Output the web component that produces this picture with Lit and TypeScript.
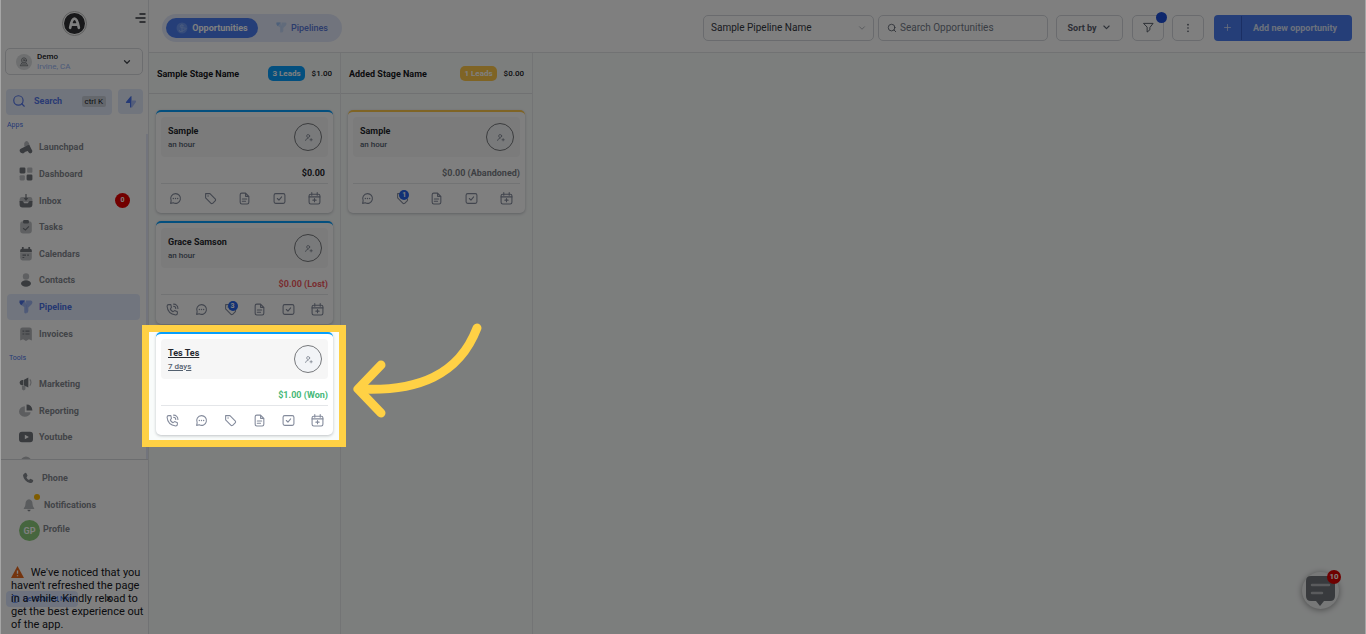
import { LitElement, html, svg, css, nothing } from "lit";
import { customElement, property } from "lit/decorators.js";

const line = (body: unknown, size = 14) => html`<svg
  width=${size} height=${size} viewBox="0 0 24 24" fill="none" stroke="currentColor"
  stroke-width="2" stroke-linecap="round" stroke-linejoin="round" aria-hidden="true">${body}</svg>`;

const solid = (body: unknown, size = 14) => html`<svg
  width=${size} height=${size} viewBox="0 0 24 24" fill="currentColor" aria-hidden="true">${body}</svg>`;

const chevron = svg`<path d="M6 9l6 6 6-6"/>`;
const magnifier = svg`<circle cx="11" cy="11" r="8"/><path d="M21 21l-4.3-4.3"/>`;
const funnel = svg`<path d="M1 4q0-3 3-3h6l3 8v12q0 2-2 2t-2-2v-9L3 8Q1 6 1 4z" opacity=".45"/><path d="M12 1h8q3 0 3 3 0 2-2 4l-5 5v6q0 2-3 4z" opacity=".45"/><path d="M1 1h9L4 9Q1 7 1 4z"/>`;
const bell = svg`<g opacity=".6"><path d="M12 2q6 1 6 8 0 5 3 8v1H3v-1q3-3 3-8 0-7 6-8z"/></g><path d="M9 20h6q-1 3-3 3t-3-3z"/>`;
const handset = svg`<path d="M6 2q2-1 3 1l2 4q0 1-1 2l-1 2q1 3 5 5l2-2q1-1 2 0l4 2q1 1 0 3-2 4-6 3Q4 19 2 7q0-3 4-5z"/>`;

const actionIcons: Record<string, unknown> = {
  call: svg`<path d="M14 6a4 4 0 0 1 4 4M14 2a8 8 0 0 1 8 8M9 3H5Q2 3 2 6q1 14 16 16 3 0 3-3v-3l-5-2-3 2q-4-2-5-5l2-3z"/>`,
  chat: svg`<path d="M12 3a9 9 0 1 1-4 17l-5 1 1-5a9 9 0 0 1 8-13z"/><path d="M8 12h.01M12 12h.01M16 12h.01" stroke-width="2.6"/>`,
  tag: svg`<path d="M3 3h8l10 10q1 2 0 3l-5 5q-2 1-3 0L3 11z"/><path d="M7.500 7.500h.01" stroke-width="2.600"/>`,
  note: svg`<path d="M14 2H7Q4 2 4 5v14q0 3 3 3h10q3 0 3-3V8zM14 2v6h6M8 13h8M8 17h6"/>`,
  task: svg`<rect x="2" y="3" width="20" height="18" rx="3"/><path d="M8 12l3 3 5-6"/>`,
  event: svg`<rect x="2" y="4" width="20" height="18" rx="3"/><path d="M2 9h20M7 1v5M17 1v5M12 12v6M9 15h6"/>`,
};

const menuIcons: Record<string, unknown> = {
  launchpad: svg`<path d="M9 5q4-7 8 0l2 7-10-1z" opacity=".5"/><path d="M3 15L15 9q3-1 4 2l4 8q0 4-4 4-2 0-4-4-4 1-8 4-5 0-6-4 0-3 2-4z"/>`,
  dashboard: svg`<rect x="1" y="1" width="10" height="10" rx="2"/><rect x="13" y="13" width="10" height="10" rx="2"/><g opacity=".45"><rect x="14" y="1" width="9" height="9" rx="2"/><rect x="1" y="14" width="9" height="9" rx="2"/></g>`,
  inbox: svg`<path d="M5 5h14q4 0 4 5v4H1v-4q0-5 4-5z" opacity=".45"/><path d="M1 12h5l3 4h6l3-4h5v6q0 5-5 5H6q-5 0-5-5z"/><path d="M11 0h2v7h3l-4 5-4-5h3z"/>`,
  tasks: svg`<rect x="2" y="2" width="20" height="21" rx="5" opacity=".45"/><rect x="7" y="0" width="10" height="6" rx="2"/><path d="M7 14l4 3 6-6" fill="none" stroke="currentColor" stroke-width="2"/>`,
  calendars: svg`<path d="M2 10h20v9q0 4-4 4H6q-4 0-4-4z" opacity=".45"/><path d="M2 9V6q0-3 3-3V0h3v3h8V0h3v3q3 0 3 3v3z"/><path d="M6 13h6v2H6zm0 4h3v2H6zm8-4h3v2h-3z"/>`,
  contacts: svg`<circle cx="12" cy="6" r="5.500" opacity=".45"/><ellipse cx="12" cy="18" rx="8.500" ry="5.500"/>`,
  pipeline: funnel,
  invoices: svg`<path d="M2 5q0-4 4-4h12q4 0 4 4v18l-5-2-5 3-5-3-5 2z" opacity=".55"/><path d="M6 6h3v2H6zm5 0h7v2h-7zm-5 5h3v2H6zm5 0h7v2h-7z"/>`,
  marketing: svg`<path d="M8 5l8-4v17l-8-4z"/><path d="M7 5v9H5q-4 0-4-4t4-5z"/><path d="M5 15h6v6q-3 4-6 0zM19 3q5 6 0 13l-1-2q3-5 0-9z" opacity=".5"/>`,
  reporting: svg`<path d="M10 4v10h10a10 9 0 1 1-10-10z" opacity=".5"/><path d="M13 1q9 0 10 10H13z"/>`,
  youtube: svg`<path d="M5 3h14q5 0 5 5v8q0 5-5 5H5q-5 0-5-5V8q0-5 5-5zm5 5v8l7-4z" fill-rule="evenodd"/>`,
  more: svg`<circle cx="12" cy="8" r="9" opacity=".5"/>`,
};

interface Opportunity {
  name: string;
  age: string;
  amount: string;
  status: "open" | "lost" | "won" | "abandoned";
  phone?: boolean;
  tags?: number;
  focused?: boolean;
}

interface Stage {
  name: string;
  leads: string;
  total: string;
  tone: "blue" | "amber";
  cards: Opportunity[];
}

const stages: Stage[] = [
  {
    name: "Sample Stage Name", leads: "3 Leads", total: "$1.00", tone: "blue",
    cards: [
      { name: "Sample", age: "an hour", amount: "$0.00", status: "open" },
      { name: "Grace Samson", age: "an hour", amount: "$0.00 (Lost)", status: "lost", phone: true, tags: 3 },
      { name: "Tes Tes", age: "7 days", amount: "$1.00 (Won)", status: "won", phone: true, focused: true },
    ],
  },
  {
    name: "Added Stage Name", leads: "1 Leads", total: "$0.00", tone: "amber",
    cards: [{ name: "Sample", age: "an hour", amount: "$0.00 (Abandoned)", status: "abandoned", tags: 1 }],
  },
];

const base = css`
  * { box-sizing: border-box; }
  svg { display: block; flex: none; overflow: visible; }
  button, input, select { font: inherit; color: inherit; margin: 0; padding: 0; border: 0; background: none; }
  a { color: inherit; text-decoration: none; }
`;

@customElement("opportunity-card")
export class OpportunityCard extends LitElement {
  @property({ attribute: false }) item!: Opportunity;
  @property() tone = "blue";

  static styles = [base, css`
    :host { display: block; position: relative; }
    .card {
      border-top: 2px solid #079ffc; border-radius: 5px; background: #fff;
      padding: 5px 5px 0; box-shadow: 0 1px 3px rgba(16, 24, 40, 0.25);
    }
    .amber { border-top-color: #ffc84a; }
    .summary {
      display: flex; align-items: center; justify-content: space-between;
      height: 40px; padding: 0 6px 0 7px; border-radius: 4px; background: #f6f6f6;
    }
    .who { padding-top: 1px; }
    .name { display: block; font-size: 9px; line-height: 14px; font-weight: 700; color: #24272d; }
    .age { display: block; font-size: 8px; line-height: 13px; font-weight: 500; color: #53606f; }
    .focused .name, .focused .age { text-decoration: underline; }
    .owner {
      display: grid; place-items: center; width: 28px; height: 28px;
      border: 1px solid #77797c; border-radius: 50%; background: #f2f4f7; color: #7a808c;
    }
    .amount {
      height: 27px; padding-top: 9px; border-bottom: 1px solid #e4e6e9;
      font-size: 9px; line-height: 14px; font-weight: 700; text-align: right; color: #7b7f86;
    }
    .open { color: #24272d; padding-right: 3px; }
    .lost { color: #f25a60; }
    .won { color: #46b878; }
    .actions { display: flex; height: 29px; margin: 0 -4px 0 -3px; }
    .action { position: relative; flex: 1; display: grid; place-items: center; color: #848b9c; }
    .count {
      position: absolute; left: 50%; top: 6px; width: 10px; height: 10px; border-radius: 50%;
      margin-left: -3px; background: #2463eb; color: #fff; font-size: 7px; line-height: 10px; font-weight: 700; text-align: center;
    }
    .spotlight {
      position: absolute; z-index: 20; inset: -7px -13px -12px -14px; pointer-events: none;
      border: 7px solid #ffd145; box-shadow: 0 0 0 1600px rgba(0, 0, 0, 0.5);
    }
    .arrow { position: absolute; z-index: 21; left: 194px; top: -11px; pointer-events: none; }
  `];

  private action(kind: string, label: string, count?: number) {
    return html`<button class="action" aria-label=${label}>
      ${line(actionIcons[kind], 13)}
      ${count ? html`<span class="count">${count}</span>` : nothing}
    </button>`;
  }

  render() {
    const o = this.item;
    return html`
      <article class="card ${this.tone} ${o.focused ? "focused" : ""}">
        <div class="summary">
          <div class="who"><span class="name">${o.name}</span><span class="age">${o.age}</span></div>
          <span class="owner">${line(svg`<circle cx="11" cy="8" r="4"/><path d="M4 20q1-6 7-6M19 15v6M16 18h6"/>`, 9)}</span>
        </div>
        <div class="amount ${o.status}">${o.amount}</div>
        <div class="actions">
          ${o.phone ? this.action("call", "Call") : nothing}
          ${this.action("chat", "Message")}
          ${this.action("tag", "Tags", o.tags)}
          ${this.action("note", "Notes")}
          ${this.action("task", "Tasks")}
          ${this.action("event", "Appointment")}
        </div>
      </article>
      ${o.focused ? html`
        <div class="spotlight"></div>
        <svg class="arrow" width="136" height="100" viewBox="350 320 136 100" fill="none"
          stroke="#ffd145" stroke-width="9" stroke-linecap="round" stroke-linejoin="round" aria-hidden="true">
          <path d="M477 327C459 374 418 391 359 388"/><path d="M381 364L358 388 381 412"/>
        </svg>` : nothing}
    `;
  }
}

@customElement("side-bar")
export class SideBar extends LitElement {
  static styles = [base, css`
    :host {
      display: flex; flex-direction: column; height: 100%; width: 149px; flex: none;
      border-right: 1px solid #e2e4e8; background: #fff;
      font-size: 9px; font-weight: 700; color: #84888f;
    }
    .brand { display: grid; grid-template-columns: 1fr auto 1fr; height: 48px; padding: 11px 2px 0 3px; }
    .logo {
      grid-column: 2; display: grid; place-items: center; width: 25px; height: 25px;
      border-radius: 50%; border: 1px solid #bbb; background: #303134; background-clip: content-box; padding: 1px; color: #fff;
    }
    .collapse { justify-self: end; align-self: start; color: #33363c; }
    .account {
      display: flex; align-items: center; gap: 5px; height: 27px; margin: 0 5px;
      padding: 1px 10px 0; border: 1px solid #d8dade; border-radius: 5px; text-align: left;
    }
    .avatar { display: grid; place-items: center; width: 16px; height: 16px; border-radius: 50%; background: #dcdee0; color: #74777c; }
    .account > svg { color: #44484f; }
    .place { flex: 1; font-size: 8px; line-height: 10px; color: #98b4f4; font-weight: 400; }
    .place b { display: block; color: #15171c; font-weight: 500; }
    .quick { display: flex; gap: 6px; margin: 14px 5px 0 6px; }
    .search {
      flex: 1; display: flex; align-items: center; height: 26px; padding: 0 6px 2px; gap: 8px;
      border-radius: 4px; background: #e3eafb; color: #5577e8;
    }
    .key { margin-left: auto; padding: 0 3px; border-radius: 2px; background: #c9ced8; color: #15171c; font-size: 8px; line-height: 11px; font-weight: 400; }
    .bolt { display: grid; place-items: center; width: 25px; height: 25px; border-radius: 4px; background: #e3eafb; color: #4a74ec; }
    .scroller { height: 345px; flex: none; overflow: hidden; border-bottom: 1px solid #d8dade; position: relative; }
    .scroller::after { content: ""; position: absolute; right: 0; top: 19px; bottom: 0; width: 2px; background: #e4e9f8; }
    .section { margin: 0; padding-left: 7px; font-size: 7px; line-height: 10px; font-weight: 400; color: #4a74ec; }
    .apps { margin-top: 5px; }
    .tools { margin-top: 6px; padding-left: 9px; }
    .menu { display: grid; grid-auto-rows: 1fr; list-style: none; margin: 4px 8px 0 7px; padding: 0; }
    .first { height: 213px; }
    .second { height: 106px; margin-top: 8px; }
    .link { display: flex; align-items: center; height: 100%; gap: 6px; padding: 0 10px 0 12px; border-radius: 4px; }
    .link svg { color: #72767d; }
    .selected, .selected svg { color: #4a70e4; }
    .selected { background: #e3ebfc; }
    .unread { margin-left: auto; width: 15px; height: 15px; border-radius: 50%; background: #e40000; color: #fff; font-size: 7px; line-height: 15px; text-align: center; }
    .footer { display: flex; flex-direction: column; padding: 4px 0 0 19px; }
    .entry { position: relative; display: flex; align-items: center; height: 27px; gap: 8px; padding-left: 3px; }
    .profile { padding: 0; gap: 3px; height: 22px; }
    .initials { width: 21px; height: 21px; border-radius: 50%; background: #8ccc7c; color: #fff; font-size: 9px; line-height: 22px; text-align: center; margin-top: 2px; }
    .dot { position: absolute; left: 15px; top: 3px; width: 6px; height: 6px; border-radius: 50%; background: #ffb800; }
    .notice { position: relative; margin: 26px 4px 0 11px; font-size: 11px; line-height: 13px; font-weight: 400; color: #15171c; }
    .text { position: relative; margin: 0; }
    .text svg { display: inline-block; vertical-align: -2px; margin-right: 4px; }
    .chip {
      position: absolute; left: -5px; top: 25px; display: flex; align-items: center; gap: 4px; height: 16px;
      padding: 0 4px 0 5px; border-radius: 4px; background: #dce7ff; color: #2464f0; font-size: 7px; white-space: nowrap;
    }
    .dismiss { position: absolute; left: 95px; top: 26px; color: #15171c; line-height: 13px; }
  `];

  private item(id: string, label: string, extra: unknown = nothing) {
    return html`<li><a href="#${id}" class="link ${id === "pipeline" ? "selected" : ""}">${solid(menuIcons[id])}${label}${extra}</a></li>`;
  }

  render() {
    return html`
      <div class="brand">
        <span class="logo"><svg width="13" height="13" viewBox="0 0 24 24" fill="none" stroke="currentColor" stroke-width="5" stroke-linecap="round" aria-hidden="true"><path d="M4 20Q7 3 12 3t8 17M9 14h6"/></svg></span>
        <button class="collapse" aria-label="Collapse menu">
          <svg width="11" height="13" viewBox="0 0 11 13" stroke="currentColor" stroke-width="1.500" stroke-linecap="round"><path d="M5 3h5M1 7h9M5 11h5"/></svg>
        </button>
      </div>
      <button class="account">
        <span class="avatar">${line(svg`<circle cx="12" cy="8" r="6"/><circle cx="12" cy="8" r="2"/><path d="M7 14l-4 7h18l-4-7M8 17h8"/>`, 10)}</span>
        <span class="place"><b>Demo</b>Irvine, CA</span>
        ${line(svg`<path d="M6 9l6 6 6-6" stroke-width="3"/>`, 10)}
      </button>
      <div class="quick">
        <button class="search">${line(magnifier, 14)}Search<span class="key">ctrl K</span></button>
        <button class="bolt" aria-label="Quick actions">${solid(svg`<path d="M13 0v23L10 23V14H3q-2 0-1-2L11 1z"/><path d="M14 4v5h7q2 1 1 3l-8 11z" opacity=".4"/>`, 12)}</button>
      </div>
      <nav class="scroller">
        <p class="section apps">Apps</p>
        <ul class="menu first">
          ${this.item("launchpad", "Launchpad")}
          ${this.item("dashboard", "Dashboard")}
          ${this.item("inbox", "Inbox", html`<span class="unread">0</span>`)}
          ${this.item("tasks", "Tasks")}
          ${this.item("calendars", "Calendars")}
          ${this.item("contacts", "Contacts")}
          ${this.item("pipeline", "Pipeline")}
          ${this.item("invoices", "Invoices")}
        </ul>
        <p class="section tools">Tools</p>
        <ul class="menu second">
          ${this.item("marketing", "Marketing")}
          ${this.item("reporting", "Reporting")}
          ${this.item("youtube", "Youtube")}
          ${this.item("more", "")}
        </ul>
      </nav>
      <div class="footer">
        <a class="entry" href="#phone">${solid(handset, 12)}Phone</a>
        <a class="entry" href="#notifications">${solid(bell, 14)}<span class="dot"></span>Notifications</a>
        <a class="entry profile" href="#profile"><span class="initials">GP</span>Profile</a>
      </div>
      <div class="notice">
        <span class="chip">${line(svg`<rect x="3" y="2" width="18" height="20" rx="4"/><path d="M12 7v10"/>`, 8)}Get Started Now</span>
        <span class="dismiss">×</span>
        <p class="text"><svg width="13" height="12" viewBox="0 0 24 22" aria-hidden="true"><path d="M12 0l12 22H0z" fill="#e8681c"/><path d="M12 8v6M12 17v2" stroke="#fff" stroke-width="2.500"/></svg>
        We've noticed that you haven't refreshed the page in a while. Kindly reload to get the best experience out of the app.</p>
      </div>
    `;
  }
}

@customElement("app-root")
export class AppRoot extends LitElement {
  static styles = [base, css`
    :host {
      display: flex; position: relative; height: 100vh; overflow: hidden; background: #f9fcfb;
      font-family: Roboto, "Liberation Sans", sans-serif; font-size: 10px; color: #15171c;
    }
    :host::after {
      content: ""; position: absolute; inset: 0; z-index: 30; pointer-events: none;
      border: solid #a6a6a6; border-width: 0 1px;
    }
    .main { flex: 1; min-width: 0; display: flex; flex-direction: column; }
    .toolbar {
      display: flex; align-items: center; height: 53px; padding: 3px 14px 0 13px;
      border-bottom: 1px solid #e2e5e6; background: #fff; gap: 8px;
    }
    .tabs { display: flex; gap: 4px; height: 28px; padding: 4px; border-radius: 14px; background: #e3e9fa; margin-right: auto; }
    .tab { display: flex; align-items: center; justify-content: center; gap: 4px; width: 92px; border-radius: 10px; color: #5878d8; font-size: 9px; font-weight: 500; }
    .tab + .tab { width: 76px; padding-left: 4px; }
    .tab svg { color: #9cc0f4; }
    .active { background: #4a7cf0; color: #fff; font-weight: 700; }
    .active svg { color: #90b4fc; }
    .box { display: flex; align-items: center; height: 26px; border: 1px solid #d4d7dc; border-radius: 5px; background: #fff; }
    .picker { position: relative; width: 171px; margin-right: -4px; color: #33373f; }
    .picker select { appearance: none; width: 100%; height: 100%; padding: 0 7px; outline: 0; }
    .picker svg { position: absolute; right: 6px; color: #a4a8b0; pointer-events: none; }
    .finder { width: 170px; padding: 0 8px; gap: 3px; color: #565c68; }
    .finder input { flex: 1; min-width: 0; outline: 0; }
    .finder input::placeholder { color: #747b88; opacity: 1; }
    .sort { justify-content: center; gap: 6px; width: 67px; margin-right: 1px; font-size: 9px; font-weight: 700; color: #5a606e; }
    .icon { position: relative; justify-content: center; width: 32px; color: #4c525e; }
    .pin { position: absolute; right: -4px; top: -4px; width: 11px; height: 11px; border-radius: 50%; background: #1d4fd8; }
    .add {
      display: flex; align-items: center; height: 26px; padding: 1px 0; margin-left: 2px; border-radius: 4px;
      background: #4a7cf0; color: #d9e2f8; font-size: 9px; font-weight: 700;
    }
    .plus { display: grid; place-items: center; width: 28px; height: 100%; border-right: 1px solid #365fc8; }
    .caption { width: 110px; padding-right: 4px; text-align: center; }
    .board { flex: 1; display: flex; min-height: 0; }
    .stage { width: 192px; flex: none; border-right: 1px solid #e6e9ea; }
    .head {
      display: flex; align-items: center; height: 41px; padding: 1px 8px 0; gap: 7px;
      border-bottom: 1px solid #e0e3e4;
    }
    .title { margin: 0 auto 0 0; font-size: 9px; font-weight: 700; }
    .leads { padding: 0 4px; border-radius: 5px; background: #079ffc; color: #fff; font-size: 8px; line-height: 15px; font-weight: 700; }
    .amber { background: #ffc84a; }
    .total { font-size: 8px; font-weight: 500; }
    .cards { display: flex; flex-direction: column; gap: 8px; padding: 16px 7px 0; }
    .support {
      position: absolute; right: 27px; bottom: 25px; width: 37px; height: 37px; border-radius: 50%;
      display: grid; place-items: center; background: #eef0f0; color: #70757a; box-shadow: 0 1px 6px rgba(0, 0, 0, 0.4);
    }
    .missed {
      position: absolute; right: -2px; top: -2px; width: 14px; height: 14px; border-radius: 50%;
      background: #dc0000; color: #fff; font-size: 8px; line-height: 14px; font-weight: 700; text-align: center;
    }
  `];

  render() {
    return html`
      <side-bar></side-bar>
      <main class="main">
        <header class="toolbar">
          <nav class="tabs">
            <a class="tab active" href="#opportunities">${solid(svg`<circle cx="12" cy="12" r="11" opacity=".5"/><path d="M16 8q-7-4-8 0t8 4-1 5-8-1M12 4v16" fill="none" stroke="currentColor" stroke-width="2"/>`, 12)}Opportunities</a>
            <a class="tab" href="#pipelines">${solid(funnel, 11)}Pipelines</a>
          </nav>
          <div class="box picker">
            <select aria-label="Pipeline"><option>Sample Pipeline Name</option></select>
            ${line(chevron, 10)}
          </div>
          <label class="box finder">${line(magnifier, 10)}<input type="text" placeholder="Search Opportunities" aria-label="Search Opportunities" /></label>
          <button class="box sort">Sort by ${line(svg`<path d="M5 8l7 7 7-7" stroke-width="3"/>`, 9)}</button>
          <button class="box icon" aria-label="Filters">${line(svg`<path d="M2 3h20l-7 9v5l-6 5V12z"/>`, 11)}<span class="pin"></span></button>
          <button class="box icon" aria-label="More options">${solid(svg`<circle cx="12" cy="4" r="2"/><circle cx="12" cy="12" r="2"/><circle cx="12" cy="20" r="2"/>`, 10)}</button>
          <button class="add"><span class="plus">${line(svg`<path d="M12 4v16M4 12h16"/>`, 9)}</span><span class="caption">Add new opportunity</span></button>
        </header>
        <div class="board">
          ${stages.map((s) => html`
            <section class="stage">
              <div class="head">
                <h2 class="title">${s.name}</h2>
                <span class="leads ${s.tone}">${s.leads}</span>
                <span class="total">${s.total}</span>
              </div>
              <div class="cards">
                ${s.cards.map((c) => html`<opportunity-card .item=${c} tone=${s.tone}></opportunity-card>`)}
              </div>
            </section>`)}
        </div>
      </main>
      <button class="support" aria-label="Support chat">
        <svg width="31" height="31" viewBox="0 0 31 31" aria-hidden="true"><path d="M6 1h19q5 0 5 5v15q0 5-5 5h-6l-4 5-4-5H6q-5 0-5-5V6q0-5 5-5z" fill="currentColor"/><path d="M7 10h17M7 18h10" stroke="#b4b7ba" stroke-width="2.500" stroke-linecap="round"/></svg>
        <span class="missed">10</span>
      </button>
    `;
  }
}
